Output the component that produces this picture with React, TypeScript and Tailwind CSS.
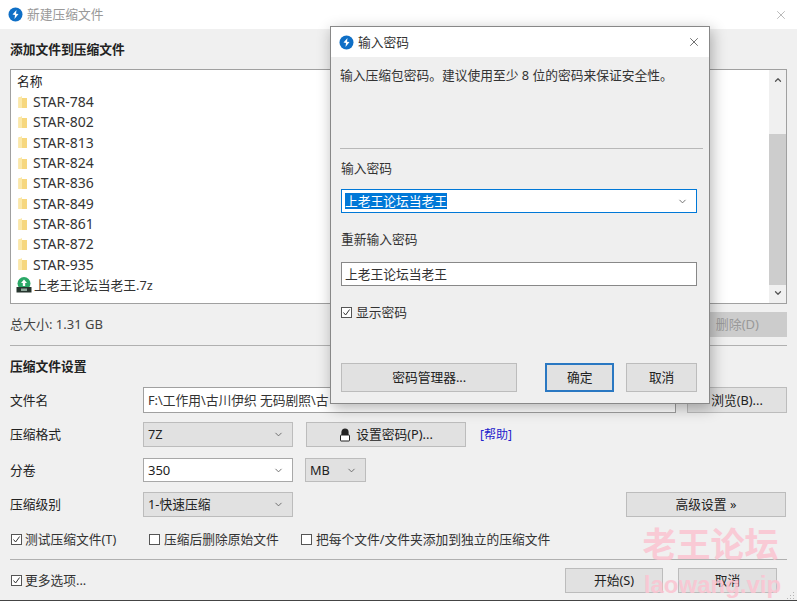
import { X, ChevronDown, ChevronUp } from 'lucide-react'

const font = { fontFamily: '"Noto Sans", "Noto Sans CJK SC", sans-serif' }
const files = ['STAR-784', 'STAR-802', 'STAR-813', 'STAR-824', 'STAR-836', 'STAR-849', 'STAR-861', 'STAR-872', 'STAR-935']

function AppIcon() {
  return (
    <svg width="15" height="15" viewBox="0 0 15 15" className="shrink-0">
      <circle cx="7.5" cy="7.5" r="7" fill="#0f6fc6" />
      <path d="M8.5 3 L4.5 7.5 L7 8 L6.5 12 L10.5 7 L8 6.8 Z" fill="#fff" />
    </svg>
  )
}

function Folder() {
  return (
    <svg width="10" height="13" viewBox="0 0 10 13" className="shrink-0">
      <path d="M0.5 1.5 L4 0.5 L4 2 L9 2 L9 12 L0.5 12 Z" fill="#f6d77f" />
      <path d="M0.5 1.5 L4 0.5 L4 12 L0.5 12 Z" fill="#fbe8a8" />
    </svg>
  )
}

function ArchiveIcon() {
  return (
    <svg width="16" height="16" viewBox="0 0 16 16" className="shrink-0">
      <circle cx="8" cy="6.5" r="6.5" fill="#2aa866" />
      <path d="M8 2.5 L11 6 L9.2 6 L9.2 9 L6.8 9 L6.8 6 L5 6 Z" fill="#fff" />
      <rect x="0.5" y="10" width="15" height="5.5" fill="#26352e" />
      <rect x="5" y="11.5" width="6" height="2.5" fill="#8fa89b" />
    </svg>
  )
}

function Check({ checked }: { checked?: boolean }) {
  return (
    <span className="w-[11px] h-[11px] border border-[#555] bg-white shrink-0 flex items-center justify-center">
      {checked && (
        <svg width="9" height="9" viewBox="0 0 9 9">
          <path d="M1.5 4.5 L3.6 7 L7.6 1.5" fill="none" stroke="#333" strokeWidth="1" />
        </svg>
      )}
    </span>
  )
}

function Btn({ children, className }: { children: React.ReactNode; className: string }) {
  return (
    <div className={`border border-[#bcbcbc] bg-[#e1e1e1] flex items-center justify-center text-[12.75px] text-[#222] ${className}`}>
      {children}
    </div>
  )
}

function Select({ value, className }: { value: string; className: string }) {
  return (
    <div className={`border border-[#bcbcbc] bg-[#e1e1e1] flex items-center justify-between pl-1 pr-2 text-[12.75px] text-[#222] ${className}`}>
      <span>{value}</span>
      <ChevronDown size={11} color="#666" />
    </div>
  )
}

function FormRow({ label, children, className }: { label: string; children: React.ReactNode; className: string }) {
  return (
    <div className={`flex items-center ${className}`}>
      <span className="w-[133px] shrink-0 text-[12.75px]">{label}</span>
      {children}
    </div>
  )
}

export default function App() {
  return (
    <div style={font} className="relative w-[800px] h-[602px] overflow-hidden bg-white text-[#222] leading-none">
      <div className="w-[797px] h-[601px] border-b border-[#444] bg-[#f0f0f0] flex flex-col">
        <div className="h-[29px] bg-white flex items-center pl-2 pr-[9px] shrink-0">
          <AppIcon />
          <span className="ml-1 text-[12.75px] text-[#999]">新建压缩文件</span>
          <X size={14} strokeWidth={1} color="#888" className="ml-auto" />
        </div>

        <div className="flex flex-col pl-[10px] pr-[10px] flex-1">
          <div className="h-[40px] flex items-center text-[12.75px] font-bold shrink-0">添加文件到压缩文件</div>

          <div className="h-[235px] border border-[#a0a0a0] bg-white flex shrink-0">
            <div className="flex-1 flex flex-col pl-[6px]">
              <div className="h-[22px] flex items-center text-[12.75px] pt-[1px]">名称</div>
              {files.map((f) => (
                <div key={f} className="h-[20.33px] flex items-center text-[14px] text-[#333]">
                  <span className="w-[16px] pl-[1px] flex items-center"><Folder /></span>
                  {f}
                </div>
              ))}
              <div className="h-[20.33px] flex items-center text-[12.75px] text-[#333] -ml-[1px]">
                <ArchiveIcon />
                <span className="ml-[2px]">上老王论坛当老王.7z</span>
              </div>
            </div>
            <div className="w-[17px] bg-[#f0f0f0] flex flex-col items-center justify-between py-[5px] relative">
              <ChevronUp size={10} strokeWidth={3} color="#555" />
              <div className="absolute left-0 right-0 top-[64px] h-[151px] bg-[#cdcdcd]" />
              <ChevronDown size={10} strokeWidth={3} color="#555" />
            </div>
          </div>

          <div className="h-[33px] mt-[4px] flex items-center justify-between shrink-0">
            <span className="text-[13px] text-[#444]">总大小: 1.31 GB</span>
            <div className="w-[110px] h-[25px] bg-[#cccccc] flex items-center justify-end pr-[28px] text-[13px] text-[#999]">删除(D)</div>
          </div>

          <div className="h-px bg-[#b0b0b0] shrink-0 mt-[4px]" />
          <div className="h-[41px] flex items-center text-[12.75px] font-bold shrink-0">压缩文件设置</div>

          <FormRow label="文件名" className="h-[26px]">
            <div className="w-[533px] h-[26px] border border-[#a0a0a0] bg-white flex items-center pl-1 text-[12.75px] text-[#333] whitespace-nowrap">F:\工作用\古川伊织 无码剧照\古</div>
            <Btn className="w-[100px] h-[26px] ml-[11px] whitespace-nowrap">浏览(B)...</Btn>
          </FormRow>

          <FormRow label="压缩格式" className="h-[25px] mt-[9px]">
            <Select value="7Z" className="w-[150px] h-[25px]" />
            <Btn className="w-[160px] h-[25px] ml-[13px] gap-[5px]">
              <svg width="12" height="14" viewBox="0 0 12 14">
                <path d="M3 7 V4 a3 3 0 0 1 6 0 V7" fill="#222" stroke="#222" strokeWidth="1.2" />
                <rect x="1.5" y="7" width="9" height="6" rx="0.5" fill="#fff" stroke="#222" strokeWidth="1" />
              </svg>
              设置密码(P)...
            </Btn>
            <span className="ml-[14px] text-xs text-[#2222cc]">[帮助]</span>
          </FormRow>

          <FormRow label="分卷" className="h-[24px] mt-[11px]">
            <div className="w-[150px] h-[24px] border border-[#a8a8a8] bg-white flex items-center justify-between pl-1 pr-2 text-[13px]">
              <span>350</span>
              <ChevronDown size={11} color="#666" />
            </div>
            <Select value="MB" className="w-[61px] h-[24px] ml-[12px]" />
          </FormRow>

          <FormRow label="压缩级别" className="h-[25px] mt-[10px]">
            <Select value="1-快速压缩" className="w-[150px] h-[25px]" />
            <Btn className="w-[160px] h-[25px] ml-[333px]">高级设置 »</Btn>
          </FormRow>

          <div className="h-[20px] mt-[12px] flex items-center text-[12.75px] text-[#333] shrink-0 whitespace-nowrap">
            <div className="w-[139px] flex items-center gap-[3px] pl-px"><Check checked />测试压缩文件(T)</div>
            <div className="w-[152px] flex items-center gap-[4px]"><Check />压缩后删除原始文件</div>
            <div className="flex items-center gap-[4px]"><Check />把每个文件/文件夹添加到独立的压缩文件</div>
          </div>

          <div className="h-px bg-[#b0b0b0] mt-[10px] shrink-0" />

          <div className="flex items-center mt-[8px] h-[25px] shrink-0 pl-px">
            <Check checked />
            <span className="ml-[3px] text-[12.75px] text-[#333]">更多选项...</span>
            <Btn className="w-[98px] h-[25px] ml-auto">开始(S)</Btn>
            <Btn className="w-[99px] h-[25px] ml-[15px] mr-[10px]">取消</Btn>
          </div>
        </div>
      </div>

      {/* watermark */}
      <div className="absolute left-[638px] top-[524px] w-[145px] flex flex-col items-center text-[#fbc4d1] opacity-85 pointer-events-none">
        <span className="text-[34px] font-bold whitespace-nowrap leading-[40px]">老王论坛</span>
        <span className="text-[24px] font-bold whitespace-nowrap leading-[28px] mt-[7px] ml-[4px] [font-family:'Liberation_Sans',sans-serif]">laowang.vip</span>
      </div>

      {/* resize grip */}
      <svg width="9" height="9" viewBox="0 0 9 9" className="absolute left-[786px] top-[591px]">
        <path d="M7 1h1v1H7zM4 4h1v1H4zM7 4h1v1H7zM1 7h1v1H1zM4 7h1v1H4zM7 7h1v1H7z" fill="#b4b4b4" />
      </svg>

      {/* password dialog */}
      <div className="absolute left-[330px] top-[26px] w-[380px] h-[378px] border border-[#888] bg-[#efefef] flex flex-col shadow-[2px_4px_14px_rgba(0,0,0,0.3)]">
        <div className="h-[30px] bg-white flex items-center pl-2 pr-[8px] shrink-0">
          <AppIcon />
          <span className="ml-[4px] text-[12.75px] text-[#333]">输入密码</span>
          <X size={14} strokeWidth={1.2} color="#333" className="ml-auto" />
        </div>
        <div className="flex flex-col pl-[10px] pr-[12px] flex-1">
          <div className="mt-[10px] h-[16px] flex items-center text-[12.75px] text-[#333] whitespace-nowrap -ml-px">输入压缩包密码。建议使用至少 8 位的密码来保证安全性。</div>
          <div className="h-px bg-[#b8b8b8] mt-[65px] -mr-[6px] -ml-px" />
          <div className="mt-[12px] h-[14px] flex items-center text-[12.75px] text-[#333]">输入密码</div>
          <div className="mt-[14px] h-[24px] border border-[#0078d7] bg-white flex items-center justify-between pl-[3px] pr-2 text-[12.75px]">
            <span className="bg-[#0078d7] text-white h-[16px] w-[102px] flex items-center whitespace-nowrap">上老王论坛当老王</span>
            <ChevronDown size={11} color="#666" />
          </div>
          <div className="mt-[19px] h-[14px] flex items-center text-[12.75px] text-[#333]">重新输入密码</div>
          <div className="mt-[16px] h-[24px] border border-[#888] bg-white flex items-center pl-[3px] text-[12.75px] text-[#333]">上老王论坛当老王</div>
          <div className="mt-[20px] h-[12px] flex items-center text-[12.75px] text-[#333]">
            <Check checked />
            <span className="ml-[4px]">显示密码</span>
          </div>
          <div className="mt-[45px] flex items-center">
            <Btn className="w-[177px] h-[29px]">密码管理器...</Btn>
            <div className="w-[69px] h-[29px] ml-[28px] border-2 border-[#2a78c2] bg-[#e1e1e1] flex items-center justify-center text-[12.75px]">确定</div>
            <Btn className="w-[71px] h-[29px] ml-[12px]">取消</Btn>
          </div>
        </div>
      </div>
    </div>
  )
}
